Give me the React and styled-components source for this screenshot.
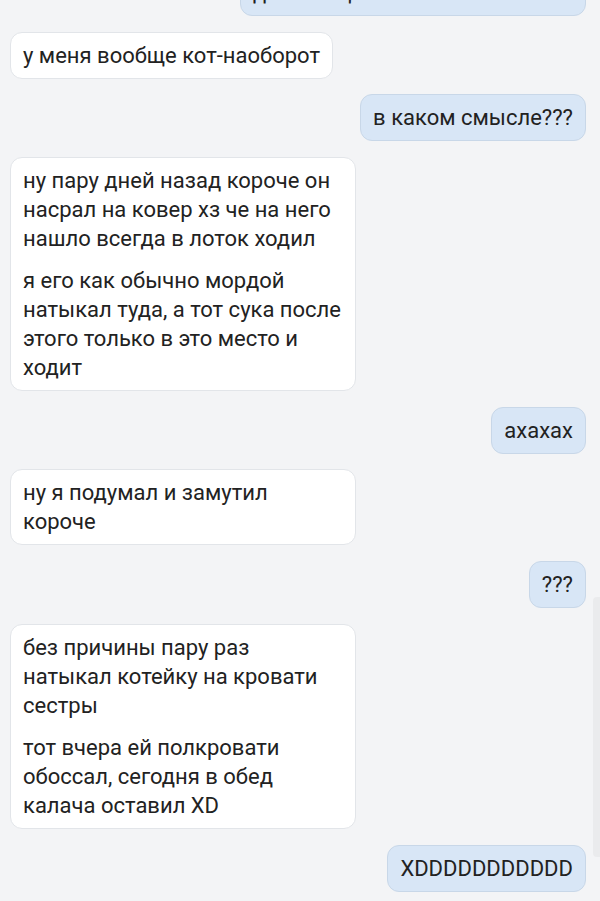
import React from "react";
import styled, { createGlobalStyle } from "styled-components";

const GlobalStyle = createGlobalStyle`
	html, body {
		margin: 0;
		padding: 0;
		background: #f3f4f6;
	}
	body {
		font-family: Roboto, "Noto Sans", sans-serif;
		-webkit-font-smoothing: antialiased;
	}
`;

const Screen = styled.div`
	position: relative;
	width: 600px;
	height: 901px;
	overflow: hidden;
	background: #f3f4f6;
`;

const Feed = styled.div`
	display: flex;
	flex-direction: column;
	gap: 15.7px;
	padding: 0 14px 0 10px;
	margin-top: -31px;
`;

const Row = styled.div`
	display: flex;
	justify-content: ${({ out }) => (out ? "flex-end" : "flex-start")};
`;

const Bubble = styled.div`
	display: flex;
	flex-direction: column;
	gap: 13px;
	box-sizing: border-box;
	max-width: 346px;
	padding: 8px 12px;
	border-radius: 12px;
	background: ${({ out }) => (out ? "#d8e6f6" : "#ffffff")};
	border: 1px solid ${({ out }) => (out ? "#c8d7e8" : "#e2e5e9")};
	color: #222222;
	font-size: 22px;
	line-height: 29px;
`;

const Para = styled.p`
	margin: 0;
`;

const ScrollTrack = styled.div`
	position: absolute;
	right: 0;
	top: 597px;
	width: 7px;
	height: 260px;
	border-radius: 4px 0 0 4px;
	background: #eaebed;
`;

const messages = [
	{ out: true, text: ["да вообще ничего не понимаю"], wide: true },
	{ out: false, text: ["у меня вообще кот-наоборот"] },
	{ out: true, text: ["в каком смысле???"] },
	{
		out: false,
		text: [
			"ну пару дней назад короче он насрал на ковер хз че на него нашло всегда в лоток ходил",
			"я его как обычно мордой натыкал туда, а тот сука после этого только в это место и ходит",
		],
	},
	{ out: true, text: ["ахахах"] },
	{ out: false, text: ["ну я подумал и замутил короче"] },
	{ out: true, text: ["???"] },
	{
		out: false,
		text: [
			"без причины пару раз натыкал котейку на кровати сестры",
			"тот вчера ей полкровати обоссал, сегодня в обед калача оставил XD",
		],
	},
	{ out: true, text: ["XDDDDDDDDDDD"] },
];

export default function App() {
	return (
		<Screen>
			<GlobalStyle />
			<Feed>
				{messages.map((m, i) => (
					<Row key={i} out={m.out ? 1 : 0}>
						<Bubble out={m.out ? 1 : 0} style={m.wide ? { width: 346 } : undefined}>
							{m.text.map((t, j) => (
								<Para key={j}>{t}</Para>
							))}
						</Bubble>
					</Row>
				))}
			</Feed>
			<ScrollTrack />
		</Screen>
	);
}
